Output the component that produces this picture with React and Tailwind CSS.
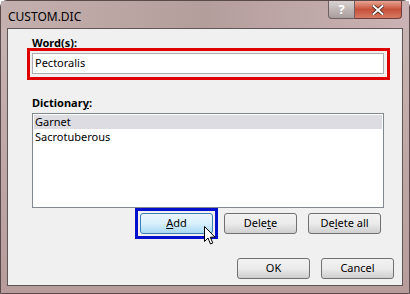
import React from 'react';

const font = { fontFamily: '"Noto Sans", "DejaVu Sans", sans-serif' };

const Btn = ({ children, hover = false, className = '' }) => (
  <div
    className={`h-[21px] w-[73px] rounded-[3px] border flex items-center justify-center text-[11px] text-black ${
      hover
        ? 'border-[#3c7fb1] bg-gradient-to-b from-[#eaf6fd] via-[#d9f0fc] to-[#a7d9f5]'
        : 'border-[#707070] bg-gradient-to-b from-[#f2f2f2] via-[#ebebeb] to-[#cfcfcf]'
    } ${className}`}
  >
    {children}
  </div>
);

export default function App() {
  return (
    <div className="w-[410px] h-[294px] overflow-hidden bg-white" style={font}>
      <div className="w-[410px] h-[294px] rounded-t-[7px] flex flex-col bg-gradient-to-b from-[#c9b5b5] via-[#bfa8a8] to-[#b89c9c] border border-[#5a4a4a]">
        {/* Title bar */}
        <div className="h-[27px] flex items-start relative bg-gradient-to-r from-[#c4b0ae] via-[#b49e9c] to-[#cbb2b4]">
          <span className="mt-[7px] ml-[7px] text-[12px] text-black">CUSTOM.DIC</span>
          <div className="ml-auto mr-[7px] flex h-[19px]">
            <div className="w-[27px] h-[18px] rounded-bl-[4px] border border-t-0 border-[#6f5f5f] bg-gradient-to-b from-[#d9d2d2] to-[#a99c9c] flex items-center justify-center text-white text-[13px] font-bold">
              ?
            </div>
            <div className="w-[47px] h-[18px] rounded-br-[4px] border border-t-0 border-l-0 border-[#6f3a3a] bg-gradient-to-b from-[#e8a493] via-[#c7503a] to-[#d47a62] flex items-center justify-center">
              <svg width="12" height="10" viewBox="0 0 12 10">
                <path d="M1.5 1 L10.5 9 M10.5 1 L1.5 9" stroke="#3a1a14" strokeWidth="3.4" strokeLinecap="square" />
                <path d="M1.5 1 L10.5 9 M10.5 1 L1.5 9" stroke="#ffffff" strokeWidth="2" strokeLinecap="square" />
              </svg>
            </div>
          </div>
        </div>

        {/* Client area */}
        <div className="flex-1 mx-[6px] mb-[7px] border border-[#5f5757] bg-[#f0f0f0] relative">
          <div className="pl-[24px] pr-[18px] pt-[6px] flex flex-col">
            <div className="text-[11px] font-bold text-black leading-[16px]">Word(s):</div>
            <div className="relative mt-[2px]">
              <div className="absolute -left-[5px] -right-[6px] -top-[5px] -bottom-[6px] border-[3px] border-[#e00000]" />
              <div className="h-[21px] border border-[#abadb3] bg-white flex items-center px-[2px] text-[11px] text-black relative">
                Pectoralis
              </div>
            </div>

            <div className="mt-[21px] text-[11px] font-bold text-black leading-[16px]">
              Dictionar<span className="underline">y</span>:
            </div>
            <div className="mt-[2px] h-[95px] border border-[#828790] bg-white text-[11px] text-black flex flex-col">
              <div className="mx-px mt-px h-[14px] bg-[#dcdce2] flex items-center px-[1px]">Garnet</div>
              <div className="h-[14px] flex items-center px-[2px] mt-[1px]">Sacrotuberous</div>
            </div>

            <div className="mt-[5px] mr-[3px] flex justify-end gap-[11px] relative">
              <div className="relative">
                <div className="absolute -left-[5px] -right-[5px] -top-[5px] -bottom-[5px] border-[3px] border-[#0010cc]" />
                <Btn hover className="relative">
                  <span className="underline">A</span>dd
                </Btn>
                <svg className="absolute left-[64px] top-[13px]" width="12" height="20" viewBox="0 0 12 20">
                  <path d="M0.5 0.5 L0.5 15.5 L4 12 L6.5 18 L8.8 17 L6.3 11.2 L11 11.2 Z" fill="white" stroke="black" strokeWidth="1" strokeLinejoin="round" />
                </svg>
              </div>
              <Btn>
                Dele<span className="underline">t</span>e
              </Btn>
              <Btn>
                De<span className="underline">l</span>ete all
              </Btn>
            </div>

            <div className="mt-[24px] -mr-[10px] flex justify-end gap-[11px]">
              <Btn>OK</Btn>
              <Btn>Cancel</Btn>
            </div>
          </div>
        </div>
      </div>
    </div>
  );
}
